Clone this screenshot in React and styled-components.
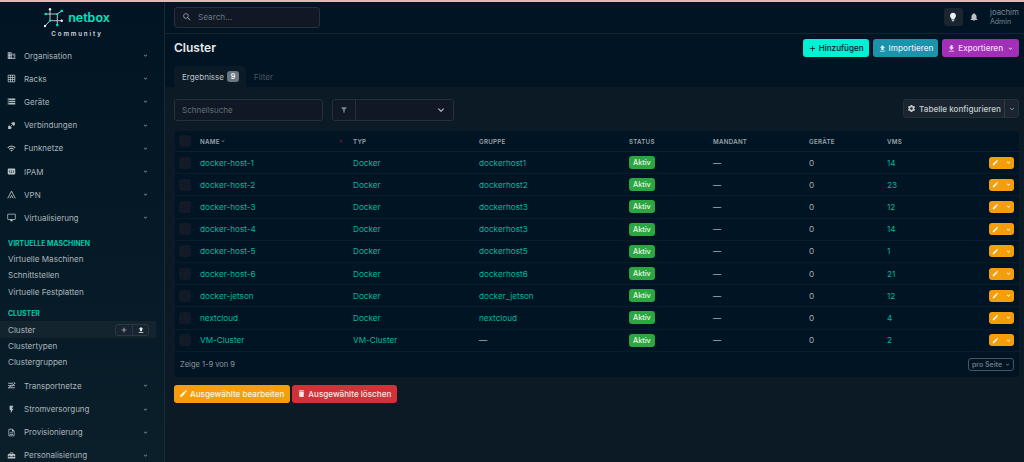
import React from 'react'
import styled, { createGlobalStyle } from 'styled-components'
import {
  MdDomain, MdGridOn, MdStorage, MdWifi, MdPin, MdOutlineDesktopWindows,
  MdFlashOn, MdOutlineDescription, MdHomeRepairService, MdAdd, MdUpload, MdDownload,
  MdSearch, MdFilterAlt, MdSettings, MdEdit, MdDelete, MdExpandMore, MdLightbulb, MdNotifications, MdClose,
} from 'react-icons/md'

const rows = [
  ['docker-host-1', 'Docker', 'dockerhost1', '14'],
  ['docker-host-2', 'Docker', 'dockerhost2', '23'],
  ['docker-host-3', 'Docker', 'dockerhost3', '12'],
  ['docker-host-4', 'Docker', 'dockerhost3', '14'],
  ['docker-host-5', 'Docker', 'dockerhost5', '1'],
  ['docker-host-6', 'Docker', 'dockerhost6', '21'],
  ['docker-jetson', 'Docker', 'docker_jetson', '12'],
  ['nextcloud', 'Docker', 'nextcloud', '4'],
  ['VM-Cluster', 'VM-Cluster', null, '2'],
]

const CableIcon = () => (
  <svg viewBox="0 0 24 24" fill="currentColor">
    <path d="M14 3h7v7l-3 3-7-7zM3 14l3-3 7 7-3 3H3z" />
    <path d="M10 14l4-4" stroke="currentColor" strokeWidth="2" />
  </svg>
)

const TunnelIcon = () => (
  <svg viewBox="0 0 24 24" fill="none" stroke="currentColor" strokeWidth="2.4">
    <path d="M2 22L12 3l10 19M8 22l4-8 4 8" />
  </svg>
)

const TransitIcon = () => (
  <svg viewBox="0 0 24 24" fill="none" stroke="currentColor" strokeWidth="2.4">
    <path d="M3 6h13M3 12c6 0 12 0 15-3l3-3M3 18h18M21 12c-6 0-10 1-13 3l-4 3M18 3l3 3-3 3" />
  </svg>
)

const topMenu = [
  [MdDomain, 'Organisation'],
  [MdGridOn, 'Racks'],
  [MdStorage, 'Geräte'],
  [CableIcon, 'Verbindungen'],
  [MdWifi, 'Funknetze'],
  [MdPin, 'IPAM'],
  [TunnelIcon, 'VPN'],
]

const bottomMenu = [
  [TransitIcon, 'Transportnetze'],
  [MdFlashOn, 'Stromversorgung'],
  [MdOutlineDescription, 'Provisionierung'],
  [MdHomeRepairService, 'Personalisierung'],
]

const Logo = () => (
  <svg viewBox="0 0 20 20" fill="none" stroke="#e8eeee" strokeWidth="0.8">
    <path d="M1.7 6H13.3V12.7H6V1.3M13.3 6L17.7 3M13.3 12.7H17.7M13.3 12.7V17M6 12.7L1 18" />
    <g fill="#00e6c3" stroke="none">
      <circle cx="1.7" cy="6" r="1.3" />
      <circle cx="17.7" cy="3" r="1.3" />
      <circle cx="13.3" cy="17" r="1.3" />
      <circle cx="6" cy="12.7" r="1.1" />
      <circle cx="13.3" cy="6" r="1.1" />
    </g>
    <g fill="#f4f7f7" stroke="none">
      <circle cx="6" cy="1.3" r="1.2" />
      <circle cx="17.7" cy="12.7" r="1.2" />
      <circle cx="1" cy="18" r="1.2" />
    </g>
  </svg>
)

const NavItem = ({ icon: Icon, label }) => (
  <MenuRow>
    <MenuIcon><Icon /></MenuIcon>
    <span>{label}</span>
    <Chevron><MdExpandMore /></Chevron>
  </MenuRow>
)

const App = () => {
  return (
    <Page>
      <GlobalStyle />
      <Sidebar>
        <Brand>
          <BrandTop><Logo /><BrandName>netbox</BrandName></BrandTop>
          <BrandSub>Community</BrandSub>
        </Brand>
        {topMenu.map(([icon, label]) => <NavItem key={label} icon={icon} label={label} />)}
        <NavItem icon={MdOutlineDesktopWindows} label="Virtualisierung" />
        <SubGroup>
          <SubHead>VIRTUELLE MASCHINEN</SubHead>
          <SubLink>Virtuelle Maschinen</SubLink>
          <SubLink>Schnittstellen</SubLink>
          <SubLink>Virtuelle Festplatten</SubLink>
        </SubGroup>
        <SubGroup>
          <SubHead>CLUSTER</SubHead>
          <SubLink $active>
            Cluster
            <MiniGroup>
              <MiniBtn><MdAdd /></MiniBtn>
              <MiniBtn><MdUpload /></MiniBtn>
            </MiniGroup>
          </SubLink>
          <SubLink>Clustertypen</SubLink>
          <SubLink>Clustergruppen</SubLink>
        </SubGroup>
        <BottomMenu>
          {bottomMenu.map(([icon, label]) => <NavItem key={label} icon={icon} label={label} />)}
        </BottomMenu>
      </Sidebar>
      <Main>
        <TopBar>
          <SearchBox><MdSearch /><span>Search...</span></SearchBox>
          <UserArea>
            <ThemeBtn><MdLightbulb /></ThemeBtn>
            <Bell><MdNotifications /></Bell>
            <UserName>joachim<small>Admin</small></UserName>
          </UserArea>
        </TopBar>
        <TitleRow>
          <Title>Cluster</Title>
          <Actions>
            <ActionBtn $bg="#00f2d4" $fg="#001423"><MdAdd />Hinzufügen</ActionBtn>
            <ActionBtn $bg="#1a93ab" $fg="#dfeef2"><MdUpload />Importieren</ActionBtn>
            <ActionBtn $bg="#a22fb8" $fg="#f0dff3"><MdDownload />Exportieren<Caret><MdExpandMore /></Caret></ActionBtn>
          </Actions>
        </TitleRow>
        <Tabs>
          <ActiveTab>Ergebnisse<Count>9</Count></ActiveTab>
          <Tab>Filter</Tab>
        </Tabs>
        <Content>
          <Toolbar>
            <QuickSearch>Schnellsuche</QuickSearch>
            <FilterGroup>
              <FilterIcon><MdFilterAlt /></FilterIcon>
              <FilterSelect><MdExpandMore /></FilterSelect>
            </FilterGroup>
            <ConfigGroup>
              <ConfigBtn><MdSettings />Tabelle konfigurieren</ConfigBtn>
              <ConfigCaret><MdExpandMore /></ConfigCaret>
            </ConfigGroup>
          </Toolbar>
          <Card>
            <HeadRow>
              <Check />
              <HeadCell>NAME<MdExpandMore /><ClearIcon><MdClose /></ClearIcon></HeadCell>
              <HeadCell>TYP</HeadCell>
              <HeadCell>GRUPPE</HeadCell>
              <HeadCell>STATUS</HeadCell>
              <HeadCell>MANDANT</HeadCell>
              <HeadCell>GERÄTE</HeadCell>
              <HeadCell>VMS</HeadCell>
            </HeadRow>
            {rows.map(([name, type, group, vms]) => (
              <Row key={name}>
                <Check />
                <Link>{name}</Link>
                <Link>{type}</Link>
                {group ? <Link>{group}</Link> : <Plain>—</Plain>}
                <div><Badge>Aktiv</Badge></div>
                <Plain>—</Plain>
                <Plain>0</Plain>
                <Link>{vms}</Link>
                <EditBtn><MdEdit /><MdExpandMore /></EditBtn>
              </Row>
            ))}
            <CardFoot>
              <span>Zeige 1-9 von 9</span>
              <PerPage>pro Seite<MdExpandMore /></PerPage>
            </CardFoot>
          </Card>
          <BulkBar>
            <BulkBtn $bg="#f59e0b" $fg="#fff6e6"><MdEdit />Ausgewählte bearbeiten</BulkBtn>
            <BulkBtn $bg="#d13239" $fg="#fbe6e7"><MdDelete />Ausgewählte löschen</BulkBtn>
          </BulkBar>
        </Content>
      </Main>
    </Page>
  )
}

export default App

const GlobalStyle = createGlobalStyle`
  html, body { margin: 0; height: 100%; background: #0b1a24; overflow: hidden; }
  body { font-family: Inter, "Liberation Sans", sans-serif; font-size: 8.2px; }
  * { box-sizing: border-box; }
`
const Page = styled.div`
  display: flex;
  width: 1024px;
  height: 462px;
  border-top: 2px solid #e8b4b8;
  overflow: hidden;
`
const Sidebar = styled.aside`
  width: 165px;
  flex: none;
  height: 460px;
  background: linear-gradient(#001423, #0a1f2a);
  border-right: 1px solid #1a2a35;
  overflow: hidden;
`
const Brand = styled.div`
  height: 42px;
  padding: 6px 10px 0 0;
  display: flex;
  flex-direction: column;
  align-items: center;
`
const BrandTop = styled.div`
  display: flex;
  align-items: center;
  gap: 4px;
  height: 20px;
  svg { width: 20px; height: 20px; }
`
const BrandName = styled.span`
  color: #00e6c3;
  font-size: 12.5px;
  font-weight: 600;
  line-height: 1;
`
const BrandSub = styled.div`
  color: #d5dbe0;
  font-size: 6.2px;
  font-weight: 600;
  letter-spacing: 1.85px;
  margin-top: 2px;
`
const MenuRow = styled.div`
  display: flex;
  align-items: center;
  height: 23.2px;
  padding-left: 7px;
  color: #aab4ba;
  font-size: 8px;
`
const MenuIcon = styled.span`
  width: 17px;
  display: flex;
  svg { width: 9px; height: 9px; color: #b8c1c6; }
`
const Chevron = styled.span`
  margin-left: auto;
  margin-right: 15px;
  display: flex;
  svg { width: 7px; height: 7px; color: #8a969d; }
`
const SubGroup = styled.div`
  margin-top: 7.5px;
`
const SubHead = styled.div`
  color: #00c9ab;
  font-size: 6.9px;
  font-weight: 700;
  height: 14px;
  line-height: 14px;
  padding-left: 8px;
`
const SubLink = styled.div`
  display: flex;
  align-items: center;
  height: 16.3px;
  padding-left: 8px;
  width: 156px;
  color: #aab4ba;
  font-size: 8.1px;
  background: ${p => (p.$active ? '#14242f' : 'transparent')};
`
const MiniGroup = styled.div`
  margin-left: auto;
  margin-right: 7px;
  display: flex;
  height: 12px;
  border: 1px solid #2a3742;
  border-radius: 3px;
  background: #18242f;
`
const MiniBtn = styled.span`
  width: 16px;
  display: flex;
  align-items: center;
  justify-content: center;
  color: #e4e9ec;
  & + & { border-left: 1px solid #2a3742; }
  svg { width: 8px; height: 8px; }
`
const BottomMenu = styled.div`
  margin-top: 4px;
`
const Main = styled.main`
  flex: 1;
  min-width: 0;
  display: flex;
  flex-direction: column;
  background: #001423;
`
const TopBar = styled.div`
  height: 32px;
  flex: none;
  display: flex;
  align-items: center;
  justify-content: space-between;
  padding: 0 5px 1px 9px;
  border-bottom: 1px solid #16242e;
`
const SearchBox = styled.div`
  width: 146px;
  height: 21px;
  display: flex;
  align-items: center;
  gap: 6px;
  padding-left: 7px;
  background: #0f1824;
  border: 1px solid #25303b;
  border-radius: 3px;
  color: #6d7780;
  font-size: 8.2px;
  svg { width: 10px; height: 10px; color: #8b959c; }
`
const UserArea = styled.div`
  display: flex;
  align-items: center;
`
const ThemeBtn = styled.div`
  width: 19px;
  height: 18px;
  display: flex;
  align-items: center;
  justify-content: center;
  background: #1a2530;
  border-radius: 3px;
  color: #f0f3f5;
  svg { width: 10px; height: 10px; }
`
const Bell = styled.div`
  margin-left: 1.5px;
  width: 19px;
  display: flex;
  justify-content: center;
  color: #b8c0c6;
  svg { width: 10px; height: 10px; }
`
const UserName = styled.div`
  margin-left: 7px;
  width: 29px;
  color: #7d878e;
  font-size: 7.8px;
  line-height: 10px;
  small { display: block; font-size: 7px; }
`
const TitleRow = styled.div`
  height: 31px;
  flex: none;
  display: flex;
  align-items: flex-start;
  justify-content: space-between;
  padding: 5px 5px 0 9px;
`
const Title = styled.h1`
  margin: 0;
  color: #e6eaed;
  font-size: 12px;
  font-weight: 600;
  line-height: 18px;
`
const Actions = styled.div`
  display: flex;
  gap: 4px;
`
const ActionBtn = styled.div`
  height: 18px;
  display: flex;
  align-items: center;
  gap: 2px;
  padding: 0 5px;
  border-radius: 3px;
  background: ${p => p.$bg};
  color: ${p => p.$fg};
  font-size: 8.1px;
  font-weight: 500;
  svg { width: 9px; height: 9px; }
`
const Caret = styled.span`
  display: flex;
  margin-left: 2px;
  svg { width: 7px; height: 7px; }
`
const Tabs = styled.div`
  height: 22px;
  flex: none;
  display: flex;
  align-items: flex-end;
  padding-left: 9px;
`
const ActiveTab = styled.div`
  height: 21px;
  width: 72px;
  display: flex;
  align-items: center;
  gap: 3px;
  padding-left: 8px;
  background: #0b1a24;
  border-radius: 4px 4px 0 0;
  color: #bcc4c9;
  font-size: 8px;
`
const Tab = styled.div`
  height: 21px;
  display: flex;
  align-items: center;
  padding-left: 8px;
  color: #4a5660;
  font-size: 8px;
`
const Count = styled.span`
  width: 12px;
  height: 11px;
  border-radius: 3px;
  background: #6a7680;
  color: #eef1f3;
  font-size: 7px;
  font-weight: 700;
  display: flex;
  align-items: center;
  justify-content: center;
`
const Content = styled.div`
  flex: 1;
  background: #0b1a24;
  padding: 12px 5px 0 9px;
`
const Toolbar = styled.div`
  display: flex;
  align-items: flex-start;
`
const QuickSearch = styled.div`
  width: 149px;
  height: 22px;
  display: flex;
  align-items: center;
  padding-left: 7px;
  background: #0f1824;
  border: 1px solid #25303b;
  border-radius: 3px;
  color: #646e77;
  font-size: 8px;
`
const FilterGroup = styled.div`
  margin-left: 9px;
  display: flex;
  height: 22px;
  width: 122px;
  background: #0f1824;
  border: 1px solid #25303b;
  border-radius: 3px;
`
const FilterIcon = styled.div`
  width: 23px;
  display: flex;
  align-items: center;
  justify-content: center;
  color: #7c868d;
  border-right: 1px solid #25303b;
  svg { width: 8px; height: 8px; }
`
const FilterSelect = styled.div`
  flex: 1;
  display: flex;
  align-items: center;
  justify-content: flex-end;
  padding-right: 6px;
  color: #c3cacf;
  svg { width: 12px; height: 12px; }
`
const ConfigGroup = styled.div`
  margin-left: auto;
  display: flex;
  height: 19px;
  background: #1a2530;
  border: 1px solid #25303b;
  border-radius: 3px;
`
const ConfigBtn = styled.div`
  width: 100px;
  display: flex;
  align-items: center;
  justify-content: center;
  gap: 3px;
  color: #c5ccd1;
  font-size: 8.1px;
  font-weight: 500;
  svg { width: 9px; height: 9px; }
`
const ConfigCaret = styled.div`
  width: 14px;
  display: flex;
  align-items: center;
  justify-content: center;
  color: #aab4ba;
  border-left: 1px solid #2f3b46;
  svg { width: 8px; height: 8px; }
`
const Card = styled.div`
  margin: 10px 0 0 1px;
  background: #001423;
  border-radius: 3px;
`
const gridCols = '21px 153px 126px 150px 84px 96px 78px 1fr auto'
const HeadRow = styled.div`
  display: grid;
  grid-template-columns: ${gridCols};
  align-items: center;
  height: 21px;
  padding: 0 5px 0 4px;
  border-bottom: 1px solid #0e202c;
`
const Check = styled.div`
  width: 12px;
  height: 12px;
  border-radius: 3px;
  background: #121a28;
`
const HeadCell = styled.div`
  position: relative;
  display: flex;
  align-items: center;
  color: #99a3a9;
  font-size: 6.2px;
  font-weight: 600;
  letter-spacing: 0.25px;
  svg { width: 6px; height: 6px; }
`
const ClearIcon = styled.span`
  position: absolute;
  left: 138px;
  display: flex;
  color: #8f2328;
`
const Row = styled.div`
  display: grid;
  grid-template-columns: ${gridCols};
  align-items: center;
  height: 22.2px;
  padding: 0 5px 0 4px;
  border-bottom: 1px solid #0a1c27;
  font-size: 8.2px;
`
const Link = styled.div`
  color: #00b89e;
`
const Plain = styled.div`
  color: #a6b0b6;
`
const Badge = styled.span`
  display: inline-flex;
  align-items: center;
  height: 13px;
  padding: 0 4px;
  border-radius: 3px;
  background: #2ba640;
  color: #e6f6e9;
  font-size: 7.3px;
  font-weight: 500;
`
const EditBtn = styled.div`
  width: 25px;
  height: 12px;
  display: flex;
  align-items: center;
  justify-content: space-between;
  padding: 0 2px 0 3px;
  border-radius: 3px;
  background: #f59e0b;
  color: #fff;
  svg { width: 7px; height: 7px; }
`
const CardFoot = styled.div`
  height: 25px;
  display: flex;
  align-items: center;
  justify-content: space-between;
  padding: 0 5px;
  color: #8e989e;
  font-size: 7.5px;
`
const PerPage = styled.div`
  width: 46px;
  height: 13px;
  display: flex;
  align-items: center;
  justify-content: space-between;
  padding: 0 2px 0 3px;
  border: 1px solid #49555f;
  border-radius: 3px;
  color: #6d7880;
  font-size: 7px;
  font-weight: 600;
  white-space: nowrap;
  svg { width: 7px; height: 7px; }
`
const BulkBar = styled.div`
  display: flex;
  gap: 2px;
  margin-top: 8px;
`
const BulkBtn = styled.div`
  height: 18px;
  display: flex;
  align-items: center;
  gap: 2px;
  padding: 0 6px 0 5px;
  border-radius: 3px;
  background: ${p => p.$bg};
  color: ${p => p.$fg};
  font-size: 8.1px;
  font-weight: 500;
  svg { width: 9px; height: 9px; }
`
